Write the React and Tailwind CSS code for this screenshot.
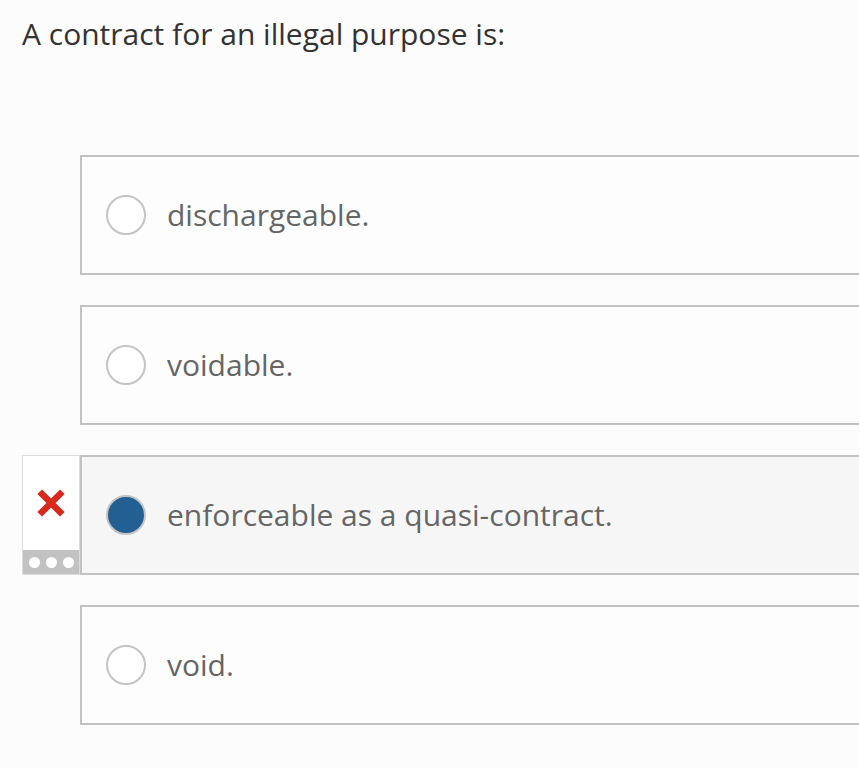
import React from "react";

const options = [
  { text: "dischargeable.", selected: false },
  { text: "voidable.", selected: false },
  { text: "enforceable as a quasi-contract.", selected: true },
  { text: "void.", selected: false },
];

function Radio({ selected }) {
  if (selected) {
    return (
      <span className="w-[40px] h-[40px] shrink-0 rounded-full border-2 border-[#c4c4c4] bg-[#245f94]" />
    );
  }
  return (
    <span className="w-[40px] h-[40px] shrink-0 rounded-full border-2 border-[#c4c4c4] bg-white" />
  );
}

function Feedback() {
  return (
    <div className="w-[58px] h-[120px] shrink-0 flex flex-col border border-[#dcdcdc] bg-white">
      <div className="flex-1 flex items-center justify-center">
        <svg width="28" height="28" viewBox="0 0 28 28">
          <path d="M5 5 L23 23 M23 5 L5 23" stroke="#d9291c" strokeWidth="6.5" strokeLinecap="square" />
        </svg>
      </div>
      <div className="h-[24px] bg-[#c2c2c2] flex items-center justify-center gap-[6px]">
        <span className="w-[11px] h-[11px] rounded-full bg-white" />
        <span className="w-[11px] h-[11px] rounded-full bg-white" />
        <span className="w-[11px] h-[11px] rounded-full bg-white" />
      </div>
    </div>
  );
}

export default function App() {
  return (
    <div
      className="min-h-screen w-[859px] overflow-hidden bg-[#fcfcfc] pl-[22px] pt-[14px]"
      style={{ fontFamily: '"Open Sans", "Liberation Sans", sans-serif' }}
    >
      <h1 className="text-[30px] leading-[40px] text-[#333333] font-normal">
        A contract for an illegal purpose is:
      </h1>
      <div className="mt-[101px] flex flex-col gap-[30px]">
        {options.map((o, i) => (
          <div key={i} className="flex">
            <div className="w-[58px] shrink-0">{o.selected && <Feedback />}</div>
            <div
              className={`flex-1 h-[120px] flex items-center gap-[21px] pl-[24px] border-2 border-r-0 border-[#c2c2c2] ${
                o.selected ? "bg-[#f6f6f6]" : "bg-[#fdfdfd]"
              }`}
            >
              <Radio selected={o.selected} />
              <span className="text-[30px] text-[#666666] leading-none">{o.text}</span>
            </div>
          </div>
        ))}
      </div>
    </div>
  );
}
